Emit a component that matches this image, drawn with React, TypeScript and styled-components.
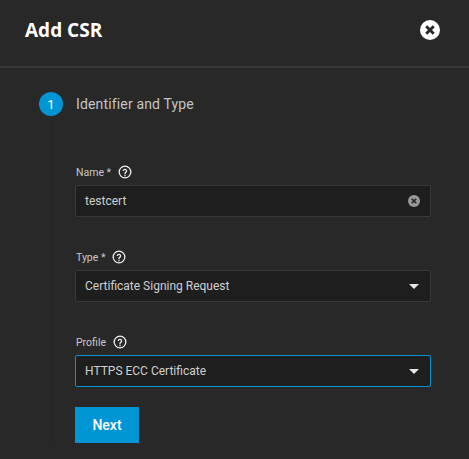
import { createGlobalStyle } from 'styled-components';
import styled from 'styled-components';

const Global = createGlobalStyle`
    html, body { margin: 0; padding: 0; background: #282828; }
    body { font-family: "Roboto", "Liberation Sans", sans-serif; overflow: hidden; }
`;

const Panel = styled.div`
    width: 469px;
    height: 459px;
    overflow: hidden;
    background: #282828;
    color: #e6e6e6;
`;

const Header = styled.header`
    display: flex;
    align-items: center;
    justify-content: space-between;
    box-sizing: border-box;
    height: 68px;
    padding: 0 29px 6px 25px;
    border-bottom: 2px solid #383838;
`;

const Title = styled.h1`
    margin: 0;
    font-family: "Open Sans", sans-serif;
    font-size: 19px;
    font-weight: 700;
    color: #fff;
`;

const CloseButton = styled.button`
    display: flex;
    width: 20px;
    height: 20px;
    padding: 0;
    border: 0;
    background: none;
`;

const Step = styled.div`
    display: flex;
    align-items: center;
    gap: 13px;
    padding: 24px 0 0 39px;
`;

const StepNumber = styled.div`
    display: flex;
    align-items: center;
    justify-content: center;
    width: 24px;
    height: 24px;
    border-radius: 50%;
    background: #0095d5;
    color: #fff;
    font-size: 13px;
`;

const StepLabel = styled.div`
    font-size: 14px;
    letter-spacing: 0.15px;
    color: #c4c4c4;
`;

const StepBody = styled.div`
    margin: 8px 0 0 51px;
    padding: 36px 38px 0 23px;
    border-left: 1px solid #222;
`;

const Field = styled.div`
    height: 85px;
`;

const LabelRow = styled.div`
    display: flex;
    align-items: center;
    gap: 7px;
    height: 24px;
    margin-bottom: 1px;
    padding-left: 1px;
    font-size: 10.5px;
    color: #c8c8c8;
`;

const Control = styled.div<{ $focused?: boolean }>`
    display: flex;
    align-items: center;
    justify-content: space-between;
    box-sizing: border-box;
    height: 32px;
    padding: 0 10px 0 9px;
    border: 1px solid ${(p) => (p.$focused ? '#0095d5' : '#383838')};
    border-radius: 2px;
    background: #1e1e1e;
    font-size: 12px;
    color: #d0d0d0;
`;

const Arrow = styled.span`
    width: 0;
    height: 0;
    margin-right: 1px;
    border-left: 5px solid transparent;
    border-right: 5px solid transparent;
    border-top: 5px solid #e6e6e6;
`;

const NextButton = styled.button`
    display: block;
    width: 64px;
    height: 36px;
    margin-top: -8px;
    padding: 0;
    border: 0;
    background: #0095d5;
    color: #fff;
    font-family: "Roboto", sans-serif;
    font-size: 14px;
    font-weight: 500;
`;

const HelpIcon = () => (
    <svg width="14" height="14" viewBox="0 0 24 24" fill="none" stroke="#f0f0f0" strokeWidth="2.2" strokeLinecap="round">
        <circle cx="12" cy="12" r="10" />
        <path d="M9 9.3a3 3 0 0 1 5.8 1c0 2-2.8 2.3-2.8 4.2" />
        <circle cx="12" cy="17.8" r="0.4" />
    </svg>
);

const ClearIcon = ({ size, fill }: { size: number; fill: string }) => (
    <svg width={size} height={size} viewBox="0 0 24 24">
        <circle cx="12" cy="12" r="12" fill={fill} />
        <path d="M7.5 7.5l9 9M16.5 7.5l-9 9" stroke="#282828" strokeWidth="3.4" />
    </svg>
);

const FormField = ({ label, value, focused, clearable }: {
    label: string;
    value: string;
    focused?: boolean;
    clearable?: boolean;
}) => (
    <Field>
        <LabelRow>
            <span>{label}</span>
            <HelpIcon />
        </LabelRow>
        <Control $focused={focused}>
            <span>{value}</span>
            {clearable ? <ClearIcon size={12} fill="#999" /> : <Arrow />}
        </Control>
    </Field>
);

export default function App() {
    return (
        <Panel>
            <Global />
            <Header>
                <Title>Add CSR</Title>
                <CloseButton>
                    <ClearIcon size={20} fill="#fff" />
                </CloseButton>
            </Header>
            <Step>
                <StepNumber>1</StepNumber>
                <StepLabel>Identifier and Type</StepLabel>
            </Step>
            <StepBody>
                <FormField label="Name *" value="testcert" clearable />
                <FormField label="Type *" value="Certificate Signing Request" />
                <FormField label="Profile" value="HTTPS ECC Certificate" focused />
                <NextButton>Next</NextButton>
            </StepBody>
        </Panel>
    );
}
